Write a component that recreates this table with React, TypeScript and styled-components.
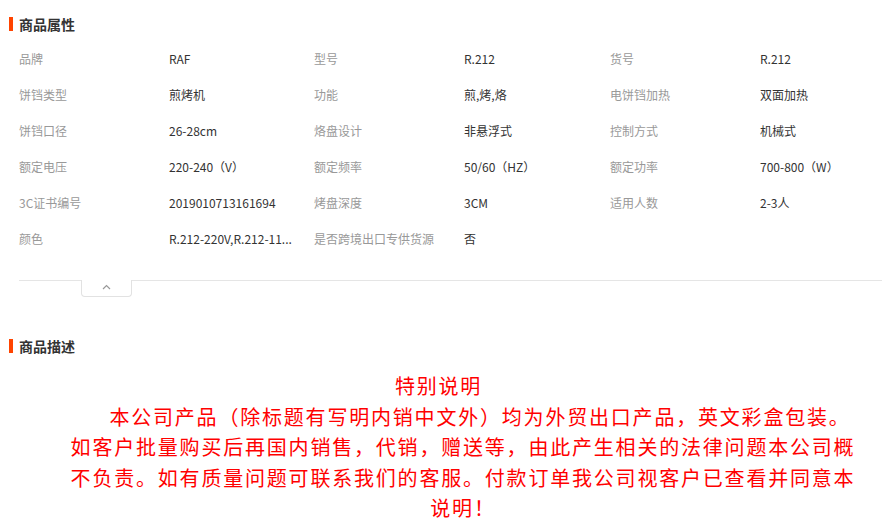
import React from "react";
import styled, { createGlobalStyle } from "styled-components";

const GlobalStyle = createGlobalStyle`
  body {
    margin: 0;
    background: #fff;
    font-family: "Noto Sans CJK SC", "Liberation Sans", sans-serif;
  }
`;

const Page = styled.div`
  width: 882px;
  height: 531px;
  overflow: hidden;
  padding-top: 14px;
  box-sizing: border-box;
`;

const Heading = styled.div`
  display: flex;
  align-items: center;
  height: 20px;
  padding-left: 9px;
  font-size: 14px;
  font-weight: bold;
  color: #333;
`;

const Bar = styled.span`
  width: 4px;
  height: 14px;
  background: #ff4400;
  margin-right: 6px;
`;

const Grid = styled.div`
  display: grid;
  grid-template-columns: 150px 145px 150px 146px 150px 141px;
  grid-auto-rows: 36px;
  padding-left: 19px;
  margin-top: 6px;
  font-size: 12px;
`;

const Cell = styled.div<{ $label?: boolean }>`
  display: flex;
  align-items: center;
  color: ${(p) => (p.$label ? "#999" : "#333")};
  white-space: nowrap;
  min-width: 0;
`;

const Fold = styled.div`
  margin: 24px 0 0 19px;
  border-top: 1px solid #e5e5e5;
`;

const FoldTab = styled.div`
  width: 49px;
  height: 12px;
  margin: -1px 0 0 62px;
  padding-top: 4px;
  background: #fff;
  border: 1px solid #e2e2e2;
  border-top: none;
  border-radius: 0 0 4px 4px;
  display: flex;
  justify-content: center;
`;

const DescHeading = styled(Heading)`
  margin-top: 39px;
`;

const Notice = styled.div`
  margin-top: 15px;
  padding-left: 44px;
  color: #ff0000;
  font-size: 20px;
  letter-spacing: 1.8px;
  line-height: 30.5px;
  text-align: center;
`;

const NoticeLine = styled.div<{ $shift?: number }>`
  white-space: nowrap;
  padding-left: ${(p) => Math.max(0, (p.$shift ?? 0) * 2)}px;
  padding-right: ${(p) => Math.max(0, -(p.$shift ?? 0) * 2)}px;
`;

const rows: [string, string][][] = [
  [["品牌", "RAF"], ["型号", "R.212"], ["货号", "R.212"]],
  [["饼铛类型", "煎烤机"], ["功能", "煎,烤,烙"], ["电饼铛加热", "双面加热"]],
  [["饼铛口径", "26-28cm"], ["烙盘设计", "非悬浮式"], ["控制方式", "机械式"]],
  [["额定电压", "220-240（V）"], ["额定频率", "50/60（HZ）"], ["额定功率", "700-800（W）"]],
  [["3C证书编号", "2019010713161694"], ["烤盘深度", "3CM"], ["适用人数", "2-3人"]],
  [["颜色", "R.212-220V,R.212-11..."], ["是否跨境出口专供货源", "否"]],
];

export default function App() {
  return (
    <Page>
      <GlobalStyle />
      <Heading>
        <Bar />
        商品属性
      </Heading>
      <Grid>
        {rows.map((row) =>
          row.map(([k, v]) => (
            <React.Fragment key={k}>
              <Cell $label>{k}</Cell>
              <Cell>{v}</Cell>
            </React.Fragment>
          ))
        )}
      </Grid>
      <Fold>
        <FoldTab>
          <svg width="9" height="6" viewBox="0 0 9 6">
            <polyline points="1,5 4.5,1.5 8,5" fill="none" stroke="#999" strokeWidth="1.2" />
          </svg>
        </FoldTab>
      </Fold>
      <DescHeading>
        <Bar />
        商品描述
      </DescHeading>
      <Notice>
        <NoticeLine $shift={-24.5}>特别说明</NoticeLine>
        <NoticeLine $shift={17}>本公司产品（除标题有写明内销中文外）均为外贸出口产品，英文彩盒包装。</NoticeLine>
        <NoticeLine>如客户批量购买后再国内销售，代销，赠送等，由此产生相关的法律问题本公司概</NoticeLine>
        <NoticeLine>不负责。如有质量问题可联系我们的客服。付款订单我公司视客户已查看并同意本</NoticeLine>
        <NoticeLine>说明！</NoticeLine>
      </Notice>
    </Page>
  );
}
